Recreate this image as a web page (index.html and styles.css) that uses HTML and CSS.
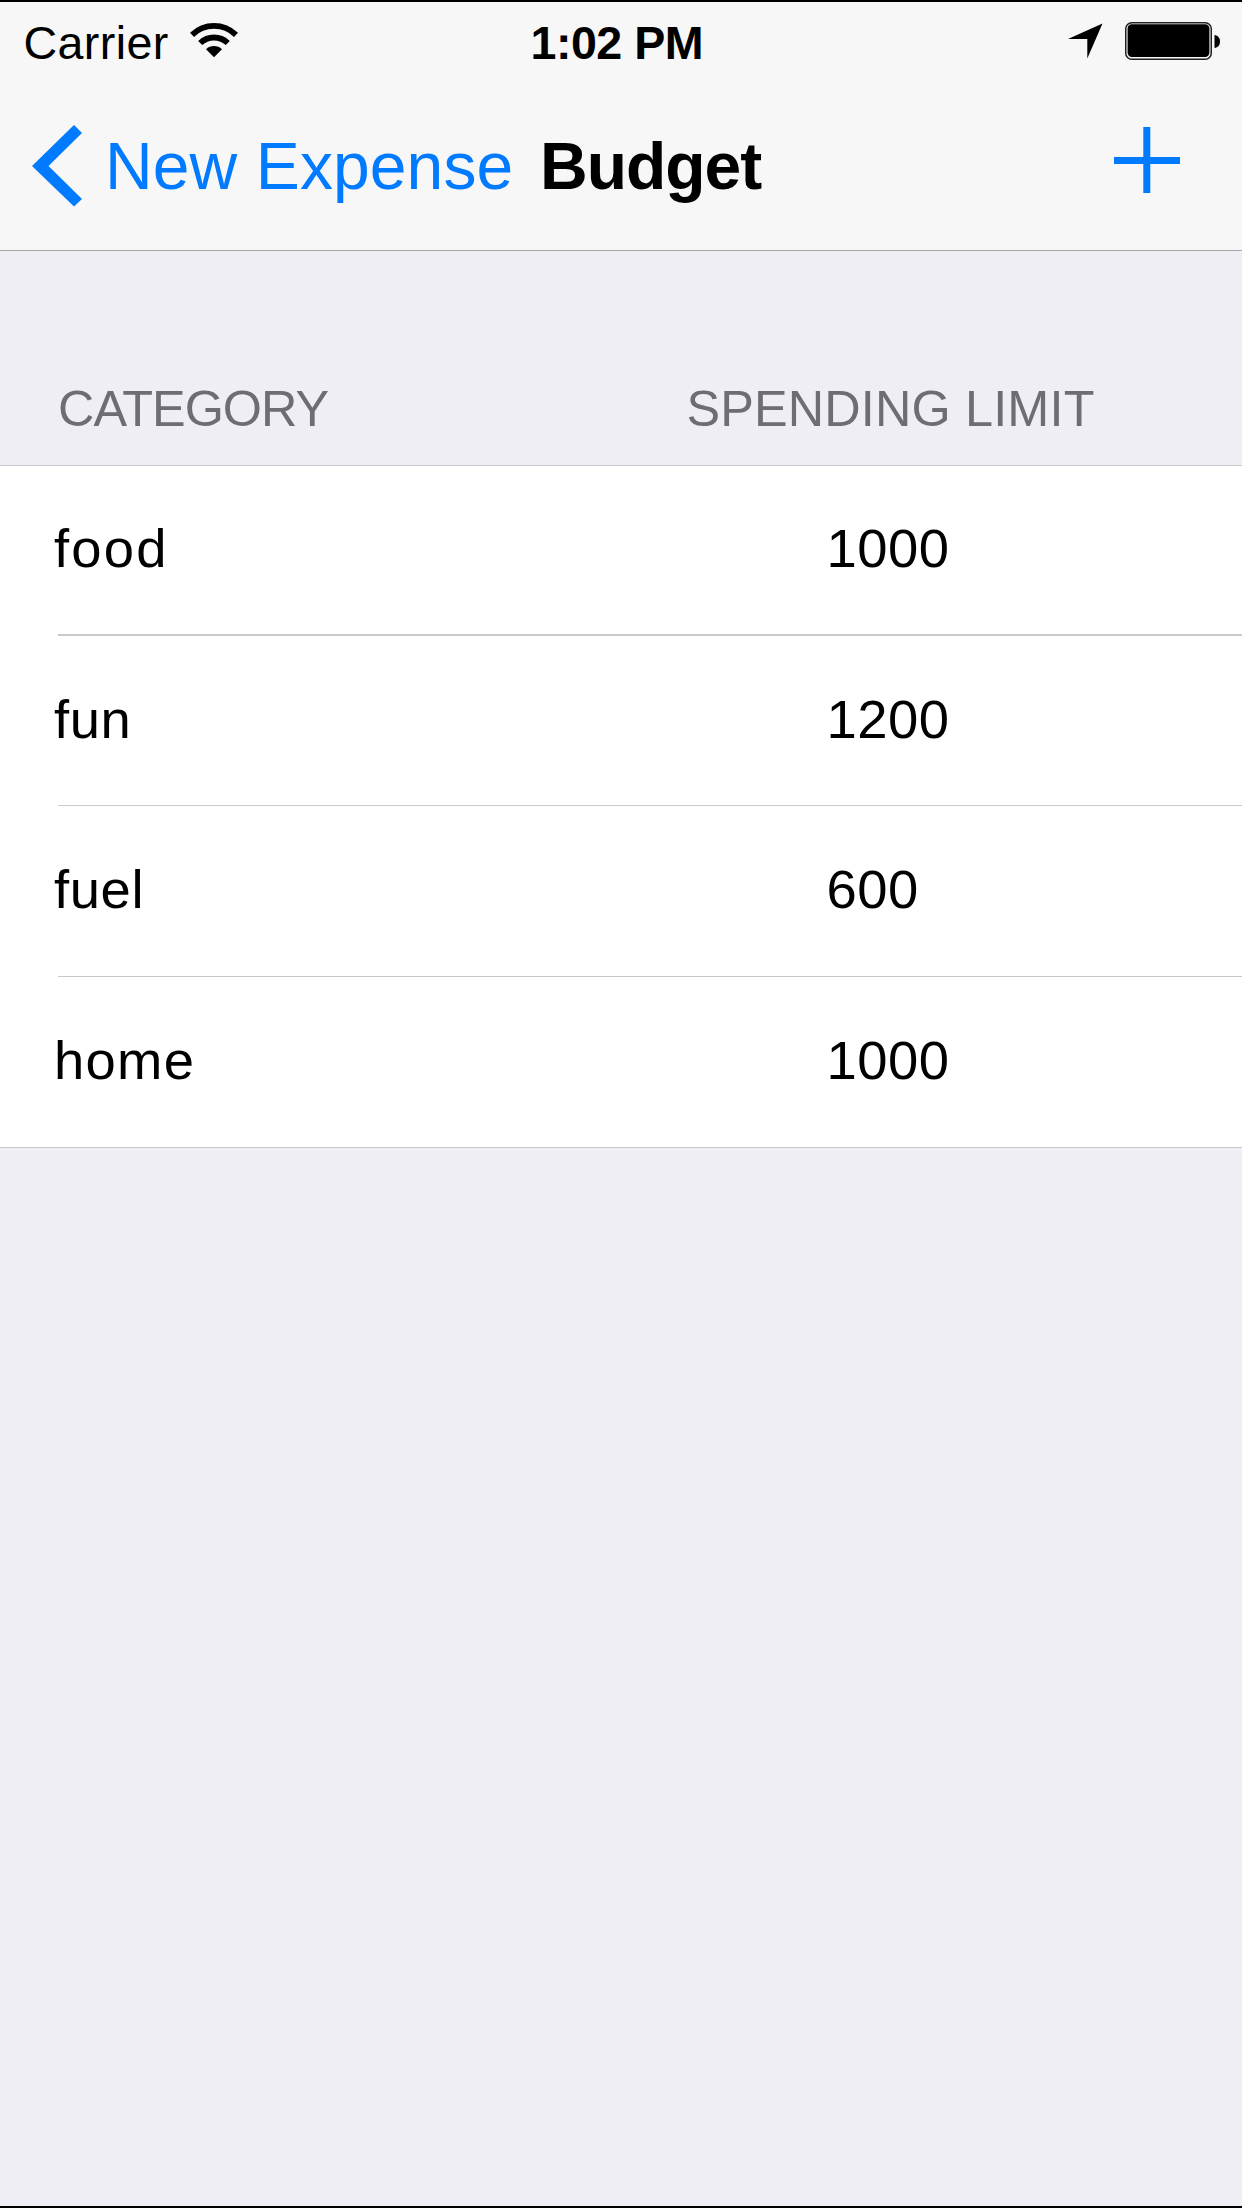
FILE: index.html
```html
<!DOCTYPE html>
<html lang="en">
<head>
<meta charset="utf-8">
<title>Budget</title>
<link rel="stylesheet" href="styles.css">
</head>
<body>
<div class="screen">
  <header class="top">
    <div class="status">
      <div class="status-left">
        <span>Carrier</span>
        <svg class="wifi" width="48" height="36" viewBox="0 0 48 36">
          <path d="M2 12.8 A31.5 31.5 0 0 1 46 12.8" fill="none" stroke="#000" stroke-width="5.8"/>
          <path d="M10.2 21 A20 20 0 0 1 37.8 21" fill="none" stroke="#000" stroke-width="5.8"/>
          <path d="M16 27.3 A11.3 11.3 0 0 1 32 27.3 L24 35.3 Z"/>
        </svg>
      </div>
      <span class="time">1:02 PM</span>
      <div class="status-right">
        <svg width="35" height="36" viewBox="0 0 35 36"><path d="M34.5 0.5 L19.3 35.5 V16 H0 Z"/></svg>
        <svg width="96" height="38" viewBox="0 0 96 38">
          <rect x="0.75" y="0.75" width="85.5" height="36.5" rx="6" fill="none" stroke="#222" stroke-width="1.5"/>
          <rect x="2.6" y="2.3" width="81.8" height="32.7" rx="4.2"/>
          <path d="M89.5 13 C93 13.5 95 16 95 19.5 S93 25.5 89.5 26 Z"/>
        </svg>
      </div>
    </div>
    <nav class="nav">
      <a class="back">
        <svg width="50" height="82" viewBox="0 0 50 82"><path d="M42 0 L50 8 L16.5 41 L50 74 L42 81.5 L0 41 Z" fill="#007aff"/></svg>
        <span>New Expense</span>
      </a>
      <h1 class="title">Budget</h1>
      <svg class="add" width="66" height="66" viewBox="0 0 66 66"><path d="M29.3 0 H36.3 V29.9 H66 V36.9 H36.3 V66 H29.3 V36.9 H0 V29.9 H29.3 Z" fill="#007aff"/></svg>
    </nav>
  </header>
  <div class="columns">
    <span class="col-category">CATEGORY</span>
    <span class="col-limit">SPENDING LIMIT</span>
  </div>
  <main class="list">
    <div class="row"><span class="name food">food</span><span class="limit">1000</span></div>
    <div class="line line-first"></div>
    <div class="row"><span class="name">fun</span><span class="limit">1200</span></div>
    <div class="line"></div>
    <div class="row"><span class="name">fuel</span><span class="limit">600</span></div>
    <div class="line"></div>
    <div class="row"><span class="name home">home</span><span class="limit">1000</span></div>
  </main>
</div>
</body>
</html>
```
FILE: styles.css
```css
* { box-sizing: border-box; }
body {
  margin: 0;
  font-family: "Liberation Sans", Arial, sans-serif;
  color: #000;
}
svg { display: block; flex: none; }
.screen {
  width: 1242px;
  height: 2208px;
  display: flex;
  flex-direction: column;
  overflow: hidden;
  background: #efeef4;
  border-top: 2px solid #000;
  border-bottom: 2px solid #000;
  white-space: nowrap;
}
.top {
  background: #f7f7f7;
  border-bottom: 1px solid #a7a7aa;
}
.status {
  height: 82px;
  display: flex;
  align-items: center;
  font-size: 46.6px;
  line-height: 54px;
}
.status-left {
  width: 530.5px;
  padding-left: 23.5px;
  display: flex;
  align-items: center;
  letter-spacing: 0.4px;
}
.wifi { margin: -7px 0 0 21.5px; }
.time { font-weight: bold; letter-spacing: -0.5px; }
.status-right {
  margin-left: auto;
  padding-right: 21px;
  display: flex;
  align-items: center;
  gap: 22px;
  margin-top: -4px;
}
.nav {
  height: 166px;
  padding: 0 62px 2px 32px;
  display: flex;
  align-items: center;
  font-size: 66px;
  line-height: 76px;
}
.back {
  width: 508px;
  display: flex;
  align-items: center;
  gap: 23px;
  color: #007aff;
  letter-spacing: 0.1px;
}
.title {
  margin: 0;
  font-size: 66px;
  font-weight: bold;
  letter-spacing: -1px;
}
.add { margin: -12px 0 0 auto; }
.columns {
  height: 214px;
  padding: 0 58px 27px;
  display: flex;
  align-items: flex-end;
  color: #6d6d72;
  font-size: 50.4px;
  line-height: 58px;
}
.col-category { width: 628.5px; letter-spacing: -1px; }
.col-limit { letter-spacing: 0.15px; }
.list {
  background: #fff;
  border-top: 1px solid #c8c7cc;
  border-bottom: 1px solid #c8c7cc;
}
.row {
  height: 170px;
  padding: 0 0 2px 54px;
  display: flex;
  align-items: center;
  font-size: 54.4px;
  line-height: 62px;
}
.row:first-child { height: 168px; padding-bottom: 3px; }
.row:nth-child(3) { height: 169px; }
.name { width: 772.5px; letter-spacing: 0.6px; }
.food { letter-spacing: 2.2px; }
.home { letter-spacing: 1.3px; }
.limit { letter-spacing: 0.5px; }
.line { height: 1px; margin-left: 58px; background: #c8c8c8; }
.line-first { height: 2px; background: #c8c7cc; }
```
